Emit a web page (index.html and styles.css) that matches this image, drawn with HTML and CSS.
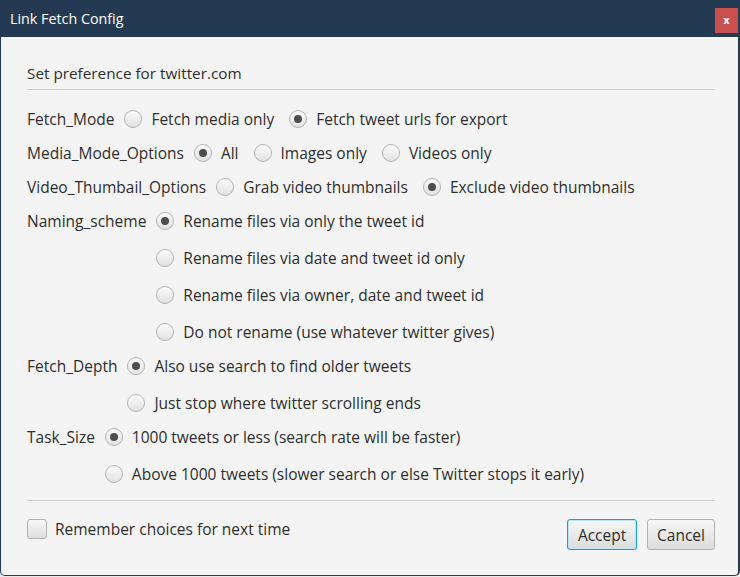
FILE: index.html
```html
<!DOCTYPE html>
<html>
<head>
<meta charset="utf-8">
<link rel="stylesheet" href="styles.css">
</head>
<body>
<div class="window">
  <div class="titlebar">
    <span class="title">Link Fetch Config</span>
    <span class="close">x</span>
  </div>
  <div class="content">
    <div class="heading">Set preference for twitter.com</div>
    <div class="sep"></div>
    <div class="form">
      <div class="group">
        <span class="label">Fetch_Mode</span>
        <div class="options inline">
          <span class="opt"><span class="radio"></span>Fetch media only</span>
          <span class="opt"><span class="radio on"></span>Fetch tweet urls for export</span>
        </div>
      </div>
      <div class="group">
        <span class="label">Media_Mode_Options</span>
        <div class="options inline">
          <span class="opt"><span class="radio on"></span>All</span>
          <span class="opt"><span class="radio"></span>Images only</span>
          <span class="opt"><span class="radio"></span>Videos only</span>
        </div>
      </div>
      <div class="group">
        <span class="label">Video_Thumbail_Options</span>
        <div class="options inline">
          <span class="opt"><span class="radio"></span>Grab video thumbnails</span>
          <span class="opt"><span class="radio on"></span>Exclude video thumbnails</span>
        </div>
      </div>
      <div class="group">
        <span class="label">Naming_scheme</span>
        <div class="options stack">
          <span class="opt"><span class="radio on"></span>Rename files via only the tweet id</span>
          <span class="opt"><span class="radio"></span>Rename files via date and tweet id only</span>
          <span class="opt"><span class="radio"></span>Rename files via owner, date and tweet id</span>
          <span class="opt"><span class="radio"></span>Do not rename (use whatever twitter gives)</span>
        </div>
      </div>
      <div class="group">
        <span class="label">Fetch_Depth</span>
        <div class="options stack">
          <span class="opt"><span class="radio on"></span>Also use search to find older tweets</span>
          <span class="opt"><span class="radio"></span>Just stop where twitter scrolling ends</span>
        </div>
      </div>
      <div class="group">
        <span class="label">Task_Size</span>
        <div class="options stack">
          <span class="opt"><span class="radio on"></span>1000 tweets or less (search rate will be faster)</span>
          <span class="opt"><span class="radio"></span>Above 1000 tweets (slower search or else Twitter stops it early)</span>
        </div>
      </div>
    </div>
    <div class="sep bottom"></div>
    <div class="footer">
      <label class="check"><span class="box"></span>Remember choices for next time</label>
      <div class="buttons">
        <button class="btn default">Accept</button>
        <button class="btn">Cancel</button>
      </div>
    </div>
  </div>
</div>
</body>
</html>
```
FILE: styles.css
```css
html, body {
  margin: 0;
  padding: 0;
}
body {
  background: #ececec;
  font-family: "Open Sans", "Noto Sans", sans-serif;
  font-size: 15.5px;
  color: #2e2e2e;
}
.window {
  width: 740px;
  height: 576px;
  box-sizing: border-box;
  border: 1px solid #243a52;
  border-right-width: 2px;
  border-top: none;
  border-radius: 0 0 5px 5px;
  background: #f4f4f4;
  display: flex;
  flex-direction: column;
  overflow: hidden;
}
.titlebar {
  height: 37px;
  flex: none;
  background: #243a52;
  display: flex;
  align-items: flex-start;
  justify-content: space-between;
}
.title {
  color: #ffffff;
  font-size: 14.3px;
  line-height: 20px;
  margin: 9px 0 0 9px;
}
.close {
  width: 23px;
  height: 25px;
  margin-top: 8px;
  background: #c9504f;
  color: #ffffff;
  font-size: 10px;
  font-weight: bold;
  line-height: 26px;
  text-align: center;
  font-family: "DejaVu Sans", sans-serif;
}
.content {
  flex: 1;
  padding: 26px 23px 0 26px;
  display: flex;
  flex-direction: column;
}
.heading {
  line-height: 20px;
  height: 20px;
  font-size: 15.3px;
}
.sep {
  height: 1px;
  background: #d0d0d0;
  margin-top: 6px;
}
.form {
  margin-top: 17px;
  display: flex;
  flex-direction: column;
  gap: 10px;
}
.group {
  display: flex;
  align-items: flex-start;
}
.label {
  line-height: 24px;
  height: 24px;
  margin-right: 10px;
  white-space: nowrap;
}
.options {
  display: flex;
}
.options.inline {
  flex-direction: row;
  gap: 15px;
}
.options.stack {
  flex-direction: column;
  gap: 13px;
}
.opt {
  display: flex;
  align-items: center;
  height: 24px;
  white-space: nowrap;
}
.radio {
  width: 18px;
  height: 18px;
  box-sizing: border-box;
  border-radius: 50%;
  border: 1px solid #b3b3b3;
  background: linear-gradient(#fbfbfb, #e2e2e2);
  box-shadow: inset 0 1px 0 #ffffff;
  margin-right: 9px;
  display: flex;
  align-items: center;
  justify-content: center;
  flex: none;
}
.radio.on::after {
  content: "";
  width: 8px;
  height: 8px;
  border-radius: 50%;
  background: #4d4d4d;
}
.sep.bottom {
  margin-top: 14px;
}
.footer {
  margin-top: 18px;
  display: flex;
  justify-content: space-between;
  align-items: flex-start;
}
.check {
  display: flex;
  align-items: center;
  height: 20px;
}
.box {
  width: 20px;
  height: 20px;
  box-sizing: border-box;
  border: 1px solid #b3b3b3;
  border-radius: 3px;
  background: linear-gradient(#f7f7f7, #dedede);
  margin-right: 8px;
}
.buttons {
  display: flex;
  gap: 10px;
}
.btn {
  height: 31px;
  box-sizing: border-box;
  padding: 0 9px;
  font-family: inherit;
  font-size: 15.5px;
  color: #2e2e2e;
  border: 1px solid #b3b3b3;
  border-radius: 3px;
  background: linear-gradient(#f7f7f7, #dcdcdc);
}
.btn.default {
  border: 1px solid #1a9fd6;
  box-shadow: inset 0 0 0 1px #bfe4f3;
  width: 70px;
}
```
